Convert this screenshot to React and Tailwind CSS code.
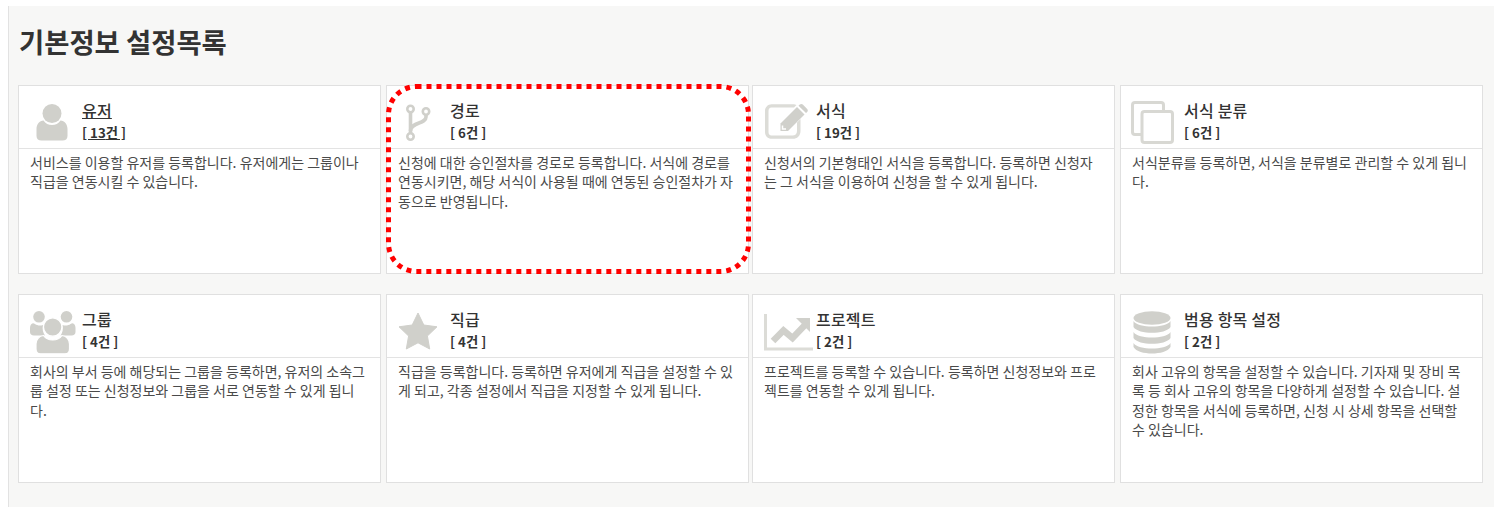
const FONT = '"Noto Sans CJK KR", "Noto Sans", sans-serif';

const UserIcon = () => (
  <svg width="32" height="37" viewBox="0 0 32 37" fill="#d0d0cb">
    <circle cx="16" cy="9.500" r="9.500" />
    <path d="M7.500 16.500C9.500 19.500 12.500 21 16 21S22.500 19.500 24.500 16.500C28.500 17 31.500 20 31.500 25V32C31.500 35 29.500 36.500 26.500 36.500H5.500C2.500 36.500 0.500 35 0.500 32V25C0.500 20 3.500 17 7.500 16.500Z" />
  </svg>
);

const BranchIcon = () => (
  <svg width="26" height="38" viewBox="0 0 26 38" fill="none" stroke="#d0d0cb">
    <circle cx="5.500" cy="5" r="3.200" strokeWidth="2.600" />
    <circle cx="21" cy="7.500" r="3.200" strokeWidth="2.600" />
    <circle cx="5.500" cy="32.500" r="3.200" strokeWidth="2.600" />
    <path d="M5.500 8.500V29" strokeWidth="3.600" />
    <path d="M21 11V13C21 20 5.500 18 5.500 27" strokeWidth="3.600" />
  </svg>
);

const EditIcon = () => (
  <svg width="43" height="35" viewBox="0 0 43 35" fill="#d0d0cb">
    <path d="M32 18.500V27C32 30 30 31.500 27.500 31.500H6.500C4.500 31.500 3.500 30 3.500 28V7C3.500 5 4.500 3.500 6.500 3.500H29L31.500 1C30.500 0.500 29.500 0.200 28 0.200H6.500C3 0.200 0 3 0 7V28C0 32 3 34.800 6.500 34.800H28C32 34.800 35.500 32 35.500 27V15Z" fill="#dcdcd7" />
    <path d="M15.500 19.500L32 3L39.500 10.500L23 27H15.500Z" />
    <path d="M33.500 1.800L34.800 0.600C35.800 -0.200 36.800 -0.200 37.800 0.600L42.200 5C43 6 43 7 42.200 8L41 9Z" />
    <path d="M17.500 21.500V25H21" fill="none" stroke="#ffffff" strokeWidth="1.500" />
  </svg>
);

const FilesIcon = () => (
  <svg width="43" height="43" viewBox="0 0 43 43" fill="none" stroke="#d8d8d3" strokeWidth="3">
    <path d="M10 33.500H4C2.500 33.500 1.500 32.500 1.500 31V4C1.500 2.500 2.500 1.500 4 1.500H30C31.500 1.500 32.500 2.500 32.500 4V10" />
    <rect x="11" y="10.500" width="30.500" height="31" rx="2.500" />
  </svg>
);

const UsersIcon = () => (
  <svg width="46" height="43" viewBox="0 0 46 43" fill="#d0d0cb">
    <circle cx="9" cy="5.800" r="5.800" />
    <circle cx="36.500" cy="5.800" r="5.800" />
    <path d="M1.500 13C2.500 12 3.500 12 5 13C7 14.500 10 15 13 14C12 18 13 22 15 24.500H4C1.500 24.500 0 23 0 21V17C0 15.500 0.500 14 1.500 13Z" />
    <path d="M44 13C43 12 42 12 40.500 13C38.500 14.500 35.500 15 32.500 14C33.500 18 32.500 22 30.500 24.500H41.500C44 24.500 45.500 23 45.500 21V17C45.500 15.500 45 14 44 13Z" />
    <circle cx="22.700" cy="16" r="9.200" stroke="#ffffff" strokeWidth="1.200" />
    <path d="M13.500 24.500C15.500 27.500 19 29 22.700 29S30 27.500 32 24.500C36.500 25 39.500 29 39.500 33V38C39.500 41 37.500 42.800 35 42.800H10.500C8 42.800 6 41 6 38V33C6 29 9 25 13.500 24.500Z" stroke="#ffffff" strokeWidth="1.200" />
  </svg>
);

const StarIcon = () => (
  <svg width="40" height="38" viewBox="0 0 40 38" fill="#d0d0cb" stroke="#d0d0cb" strokeLinejoin="round">
    <path d="M20 1L25.800 13L39 14.800L29.400 24L31.700 37L20 30.800L8.300 37L10.600 24L1 14.800L14.200 13Z" />
  </svg>
);

const ChartIcon = () => (
  <svg width="49" height="37" viewBox="0 0 49 37" fill="#dcdcd7">
    <path d="M0 0H3V33.500H49V36.500H0Z" />
    <path d="M9 27L19.500 16.500L28.500 24L41 11" fill="none" stroke="#d0d0cb" strokeWidth="6.500" />
    <path d="M32 4H46V18Z" fill="#d0d0cb" />
  </svg>
);

const DbIcon = () => (
  <svg width="38" height="43" viewBox="0 0 38 43" fill="#d0d0cb">
    <ellipse cx="19" cy="7" rx="18.500" ry="6.800" />
    <path d="M0.500 10C3 14 11 15.500 19 15.500S35 14 37.500 10V16C35 20 27 21.800 19 21.800S3 20 0.500 16Z" />
    <path d="M0.500 21C3 25 11 26.500 19 26.500S35 25 37.500 21V27C35 31 27 32.800 19 32.800S3 31 0.500 27Z" />
    <path d="M0.500 32C3 36 11 37.500 19 37.500S35 36 37.500 32V36C35 40.500 27 42.500 19 42.500S3 40.500 0.500 36Z" />
  </svg>
);

const Card = ({ icon, iconPos, title, count, text, underline }) => (
  <div className="w-[363px] h-[189px] shrink-0 bg-white border border-[#e0e0e0]">
    <div className="h-[63px] flex border-b border-[#e3e3e3]">
      <div className={`w-[63px] shrink-0 ${iconPos}`}>{icon}</div>
      <div className={`pt-[14px] text-[#333] ${underline ? 'underline' : ''}`}>
        <div className="text-[16px] leading-[20px] font-medium tracking-[0.2px]">{title}</div>
        <div className="text-[13.300px] leading-[20px] font-bold mt-[3px]">[ {count}건 ]</div>
      </div>
    </div>
    <p className="px-[11px] pt-[4px] text-[14px] leading-[19.300px] text-[#4a4a4a] break-all">{text}</p>
  </div>
);

const row1 = [
  { icon: <UserIcon />, iconPos: 'pl-[17px] pt-[18px]', title: '유저', count: 13, underline: true, text: '서비스를 이용할 유저를 등록합니다. 유저에게는 그룹이나 직급을 연동시킬 수 있습니다.' },
  { icon: <BranchIcon />, iconPos: 'pl-[18px] pt-[18px]', title: '경로', count: 6, text: '신청에 대한 승인절차를 경로로 등록합니다. 서식에 경로를 연동시키면, 해당 서식이 사용될 때에 연동된 승인절차가 자동으로 반영됩니다.' },
  { icon: <EditIcon />, iconPos: 'pl-[12px] pt-[18px]', title: '서식', count: 19, text: '신청서의 기본형태인 서식을 등록합니다. 등록하면 신청자는 그 서식을 이용하여 신청을 할 수 있게 됩니다.' },
  { icon: <FilesIcon />, iconPos: 'pl-[10px] pt-[15px]', title: '서식 분류', count: 6, text: '서식분류를 등록하면, 서식을 분류별로 관리할 수 있게 됩니다.' },
];
const row2 = [
  { icon: <UsersIcon />, iconPos: 'pl-[11px] pt-[16px]', title: '그룹', count: 4, text: '회사의 부서 등에 해당되는 그룹을 등록하면, 유저의 소속그룹 설정 또는 신청정보와 그룹을 서로 연동할 수 있게 됩니다.' },
  { icon: <StarIcon />, iconPos: 'pl-[11px] pt-[17px]', title: '직급', count: 4, text: '직급을 등록합니다. 등록하면 유저에게 직급을 설정할 수 있게 되고, 각종 설정에서 직급을 지정할 수 있게 됩니다.' },
  { icon: <ChartIcon />, iconPos: 'pl-[11px] pt-[19px]', title: '프로젝트', count: 2, text: '프로젝트를 등록할 수 있습니다. 등록하면 신청정보와 프로젝트를 연동할 수 있게 됩니다.' },
  { icon: <DbIcon />, iconPos: 'pl-[12px] pt-[16px]', title: '범용 항목 설정', count: 2, text: '회사 고유의 항목을 설정할 수 있습니다. 기자재 및 장비 목록 등 회사 고유의 항목을 다양하게 설정할 수 있습니다. 설정한 항목을 서식에 등록하면, 신청 시 상세 항목을 선택할 수 있습니다.' },
];

const Row = ({ items }) => (
  <div className="flex gap-[3px]">
    <div className="flex gap-[5px]">
      <Card {...items[0]} />
      <Card {...items[1]} />
    </div>
    <div className="flex gap-[5px]">
      <Card {...items[2]} />
      <Card {...items[3]} />
    </div>
  </div>
);

export default function App() {
  return (
    <div className="bg-white h-[521px] pt-[6px] pl-[8px] overflow-hidden" style={{ fontFamily: FONT }}>
      <div className="relative h-[501px] bg-[#f7f7f6] border-l border-[#e2e2e2] pl-[9px] pt-[16px]">
        <h1 className="text-[27.400px] leading-[38px] font-bold text-[#333] pl-[1px]">기본정보 설정목록</h1>
        <div className="mt-[25px] flex flex-col gap-[20px]">
          <Row items={row1} />
          <Row items={row2} />
        </div>
        <svg className="absolute left-[377px] top-[78px]" width="365" height="190" fill="none">
          <rect x="2.500" y="2.500" width="360" height="185" rx="28" stroke="#ff0000" strokeWidth="5" strokeDasharray="5 5" />
        </svg>
      </div>
    </div>
  );
}
